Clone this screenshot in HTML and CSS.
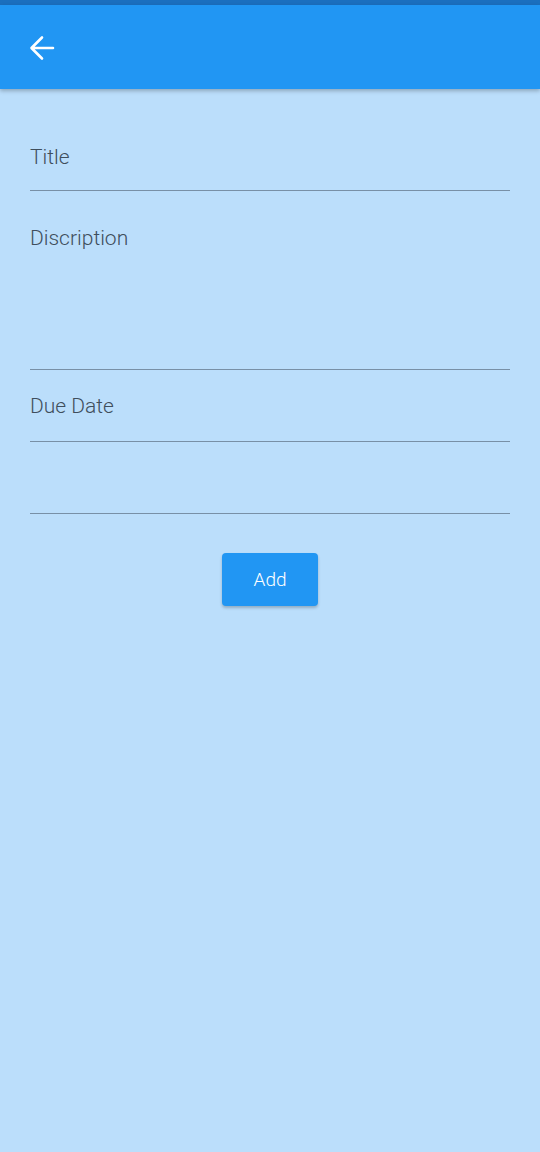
FILE: index.html
```html
<!DOCTYPE html>
<html>
<head>
<meta charset="utf-8">
<link rel="stylesheet" href="styles.css">
</head>
<body>
<div class="status"></div>
<header class="appbar">
  <svg class="back" width="26" height="26" viewBox="0 0 26 26"><path d="M24 13H3M13 2.5L2.5 13L13 23.5" fill="none" stroke="#fff" stroke-width="2.6" stroke-linecap="round" stroke-linejoin="round"/></svg>
</header>
<main class="form">
  <div class="field f-title"><span class="label">Title</span></div>
  <div class="field f-desc"><span class="label">Discription</span></div>
  <div class="field f-date"><span class="label">Due Date</span></div>
  <div class="field f-empty"></div>
  <div class="actions"><button class="btn">Add</button></div>
</main>
</body>
</html>
```
FILE: styles.css
```css
html, body { margin: 0; padding: 0; }
body {
  width: 540px;
  height: 1152px;
  background: #bbdefb;
  font-family: Roboto, "Noto Sans", sans-serif;
  overflow: hidden;
}
.status { height: 5px; background: #1b6fbe; }
.appbar {
  height: 84px;
  background: #2196f3;
  display: flex;
  align-items: center;
  padding-left: 29px;
  box-shadow: 0 2px 4px rgba(0,0,0,0.25);
  position: relative;
}
.back { display: block; margin-top: 2px; }
.form { padding: 0 30px; }
.field {
  border-bottom: 1.5px solid #7890a6;
  box-sizing: border-box;
}
.label {
  display: block;
  font-size: 21px;
  font-weight: 300;
  line-height: 24px;
  color: #3f4e5c;
}
.f-title { height: 102px; padding-top: 56px; }
.f-desc { height: 179px; padding-top: 35px; }
.f-date { height: 72px; padding-top: 24px; }
.f-empty { height: 72px; }
.actions { display: flex; justify-content: center; padding-top: 39px; }
.btn {
  width: 96px;
  height: 53px;
  border: none;
  border-radius: 4px;
  background: #2196f3;
  color: #fff;
  font-family: Roboto, "Noto Sans", sans-serif;
  font-size: 19px;
  font-weight: 300;
  box-shadow: 0 2px 3px rgba(0,0,0,0.22);
  padding: 0;
}
```
